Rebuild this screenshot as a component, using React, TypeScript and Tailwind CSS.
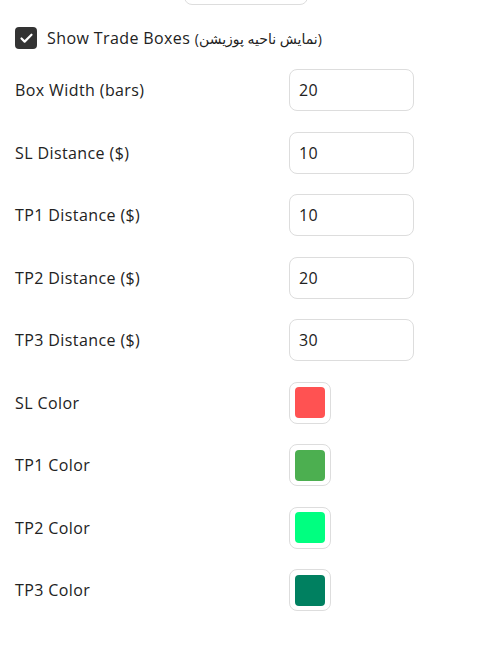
import { Check } from 'lucide-react';

const numberFields = [
  { label: 'Box Width (bars)', value: '20' },
  { label: 'SL Distance ($)', value: '10' },
  { label: 'TP1 Distance ($)', value: '10' },
  { label: 'TP2 Distance ($)', value: '20' },
  { label: 'TP3 Distance ($)', value: '30' },
];

const colorFields = [
  { label: 'SL Color', color: '#ff5252' },
  { label: 'TP1 Color', color: '#4caf50' },
  { label: 'TP2 Color', color: '#00ff80' },
  { label: 'TP3 Color', color: '#008060' },
];

export default function App() {
  return (
    <div className="min-h-[649px] w-[485px] overflow-hidden bg-white px-[15px] font-['Open_Sans','DejaVu_Sans',sans-serif] text-[16px] tracking-[0.4px] text-[#222]">
      {/* tail of the previous field */}
      <div className="ml-[169px] mt-[-31px] h-[36px] w-[124px] rounded-lg border border-[#ddd]" />

      {/* Checkbox */}
      <label className="mt-[22px] flex h-[22px] items-center gap-[10px]">
        <span className="flex h-[22px] w-[22px] items-center justify-center rounded-[4px] bg-[#333]">
          <Check className="h-[15px] w-[15px] text-white" strokeWidth={3.5} />
        </span>
        <span>
          Show Trade Boxes <span className="text-[14px] tracking-normal">(نمایش ناحیه پوزیشن)</span>
        </span>
      </label>

      {/* Fields */}
      <div className="mt-[20px] flex flex-col gap-[20.5px]">
        {numberFields.map((f) => (
          <div key={f.label} className="flex h-[42px] items-center">
            <span className="w-[274px]">{f.label}</span>
            <div className="flex h-[42px] w-[125px] items-center rounded-lg border border-[#ddd] px-[9px]">
              {f.value}
            </div>
          </div>
        ))}
        {colorFields.map((f) => (
          <div key={f.label} className="flex h-[42px] items-center">
            <span className="w-[274px]">{f.label}</span>
            <div className="flex h-[42px] w-[42px] items-center justify-center rounded-lg border border-[#ddd]">
              <div className="h-[31px] w-[30px] rounded-[4px]" style={{ backgroundColor: f.color }} />
            </div>
          </div>
        ))}
      </div>
    </div>
  );
}
